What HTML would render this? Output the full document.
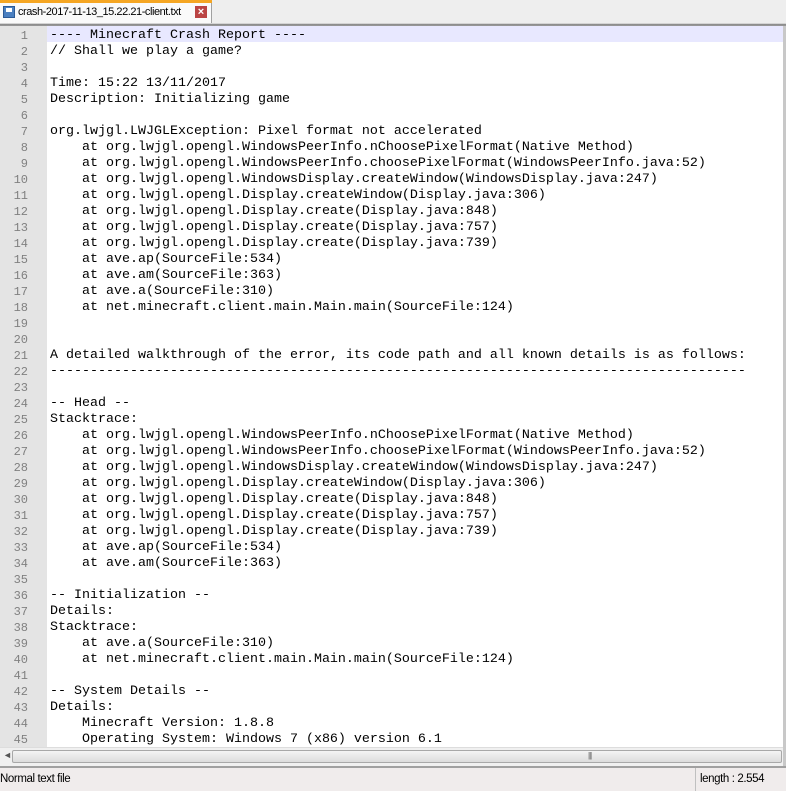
<!DOCTYPE html>
<html><head><meta charset="utf-8"><style>
*{margin:0;padding:0;box-sizing:border-box}
body{width:786px;height:791px;overflow:hidden;background:#f0f0f0;position:relative;font-family:"Liberation Sans",sans-serif}
#tabbar{position:absolute;left:0;top:0;width:786px;height:24px;background:#eeeeee}
#tab{position:absolute;left:0;top:0;width:212px;height:24px;background:#fafafa;border-right:1px solid #a0a0a0}
#tab .or{position:absolute;left:0;top:0;width:212px;height:3px;background:#f5a623}
#tab .lbl{position:absolute;left:18px;top:6px;font-size:11px;color:#000;letter-spacing:-0.45px}
#tab .ic{position:absolute;left:3px;top:6px;width:12px;height:12px;background:#4a7fc0;border:1px solid #2b5a96}
#tab .ic:after{content:"";position:absolute;left:2px;top:1px;width:6px;height:4px;background:#fff}
#tab .x{position:absolute;left:195px;top:6px;width:12px;height:12px;background:#b44;color:#fff;font-size:11px;line-height:12px;text-align:center;font-weight:bold}
#sep{position:absolute;left:0;top:23px;width:786px;height:3px;background:linear-gradient(#fff,#808080 50%,#a0a0a0)}
#ed{position:absolute;left:0;top:26px;width:783px;height:721px;background:#fff;overflow:hidden}
#gut{position:absolute;left:0;top:0;width:47px;height:721px;background:#e4e4e4}
#rb{position:absolute;left:783px;top:26px;width:3px;height:742px;background:#c8c8c8}
.l{position:absolute;left:0;height:16px;width:783px;font-family:"Liberation Mono",monospace;font-size:13.33px;line-height:16px;white-space:pre;color:#000}
.l .n{position:absolute;left:0;top:2px;width:28px;text-align:right;color:#808080;font-size:12px}
.l .t{position:absolute;left:50px;top:2px}
.hl{background:linear-gradient(to right,transparent 47px,#e8e8ff 47px)}
#hs{position:absolute;left:0;top:747px;width:783px;height:17px;background:#f0f0f0;border-top:1px solid #ddd}
#hs .th{position:absolute;left:12px;top:2px;width:770px;height:13px;border:1px solid #a8a8a8;border-radius:2px;background:linear-gradient(#f4f4f4,#dcdcdc)}
#hs .ar{position:absolute;left:3px;top:2px;font-size:9px;color:#555}
#hs .gr{position:absolute;left:588px;top:3px;font-size:8px;color:#666;letter-spacing:-1px}
#sb{position:absolute;left:0;top:766px;width:786px;height:25px;background:#f0ecec;border-top:2px solid #a0a0a0;font-size:11.5px;color:#000}
#sb .a{position:absolute;left:0;top:5px;letter-spacing:-0.4px}
#sb .d{position:absolute;left:695px;top:0;width:1px;height:23px;background:#c0c0c0}
#sb .b{position:absolute;left:700px;top:5px;letter-spacing:-0.4px}
</style></head><body>
<div id="tabbar"><div id="tab"><div class="or"></div><div class="ic"></div><div class="lbl">crash-2017-11-13_15.22.21-client.txt</div><div class="x">×</div></div></div>
<div id="sep"></div>
<div id="ed"><div id="gut"></div>
<div class="l hl" style="top:0"><span class="n">1</span><span class="t">---- Minecraft Crash Report ----</span></div>
<div class="l" style="top:16px"><span class="n">2</span><span class="t">// Shall we play a game?</span></div>
<div class="l" style="top:32px"><span class="n">3</span></div>
<div class="l" style="top:48px"><span class="n">4</span><span class="t">Time: 15:22 13/11/2017</span></div>
<div class="l" style="top:64px"><span class="n">5</span><span class="t">Description: Initializing game</span></div>
<div class="l" style="top:80px"><span class="n">6</span></div>
<div class="l" style="top:96px"><span class="n">7</span><span class="t">org.lwjgl.LWJGLException: Pixel format not accelerated</span></div>
<div class="l" style="top:112px"><span class="n">8</span><span class="t">    at org.lwjgl.opengl.WindowsPeerInfo.nChoosePixelFormat(Native Method)</span></div>
<div class="l" style="top:128px"><span class="n">9</span><span class="t">    at org.lwjgl.opengl.WindowsPeerInfo.choosePixelFormat(WindowsPeerInfo.java:52)</span></div>
<div class="l" style="top:144px"><span class="n">10</span><span class="t">    at org.lwjgl.opengl.WindowsDisplay.createWindow(WindowsDisplay.java:247)</span></div>
<div class="l" style="top:160px"><span class="n">11</span><span class="t">    at org.lwjgl.opengl.Display.createWindow(Display.java:306)</span></div>
<div class="l" style="top:176px"><span class="n">12</span><span class="t">    at org.lwjgl.opengl.Display.create(Display.java:848)</span></div>
<div class="l" style="top:192px"><span class="n">13</span><span class="t">    at org.lwjgl.opengl.Display.create(Display.java:757)</span></div>
<div class="l" style="top:208px"><span class="n">14</span><span class="t">    at org.lwjgl.opengl.Display.create(Display.java:739)</span></div>
<div class="l" style="top:224px"><span class="n">15</span><span class="t">    at ave.ap(SourceFile:534)</span></div>
<div class="l" style="top:240px"><span class="n">16</span><span class="t">    at ave.am(SourceFile:363)</span></div>
<div class="l" style="top:256px"><span class="n">17</span><span class="t">    at ave.a(SourceFile:310)</span></div>
<div class="l" style="top:272px"><span class="n">18</span><span class="t">    at net.minecraft.client.main.Main.main(SourceFile:124)</span></div>
<div class="l" style="top:288px"><span class="n">19</span></div>
<div class="l" style="top:304px"><span class="n">20</span></div>
<div class="l" style="top:320px"><span class="n">21</span><span class="t">A detailed walkthrough of the error, its code path and all known details is as follows:</span></div>
<div class="l" style="top:336px"><span class="n">22</span><span class="t">---------------------------------------------------------------------------------------</span></div>
<div class="l" style="top:352px"><span class="n">23</span></div>
<div class="l" style="top:368px"><span class="n">24</span><span class="t">-- Head --</span></div>
<div class="l" style="top:384px"><span class="n">25</span><span class="t">Stacktrace:</span></div>
<div class="l" style="top:400px"><span class="n">26</span><span class="t">    at org.lwjgl.opengl.WindowsPeerInfo.nChoosePixelFormat(Native Method)</span></div>
<div class="l" style="top:416px"><span class="n">27</span><span class="t">    at org.lwjgl.opengl.WindowsPeerInfo.choosePixelFormat(WindowsPeerInfo.java:52)</span></div>
<div class="l" style="top:432px"><span class="n">28</span><span class="t">    at org.lwjgl.opengl.WindowsDisplay.createWindow(WindowsDisplay.java:247)</span></div>
<div class="l" style="top:448px"><span class="n">29</span><span class="t">    at org.lwjgl.opengl.Display.createWindow(Display.java:306)</span></div>
<div class="l" style="top:464px"><span class="n">30</span><span class="t">    at org.lwjgl.opengl.Display.create(Display.java:848)</span></div>
<div class="l" style="top:480px"><span class="n">31</span><span class="t">    at org.lwjgl.opengl.Display.create(Display.java:757)</span></div>
<div class="l" style="top:496px"><span class="n">32</span><span class="t">    at org.lwjgl.opengl.Display.create(Display.java:739)</span></div>
<div class="l" style="top:512px"><span class="n">33</span><span class="t">    at ave.ap(SourceFile:534)</span></div>
<div class="l" style="top:528px"><span class="n">34</span><span class="t">    at ave.am(SourceFile:363)</span></div>
<div class="l" style="top:544px"><span class="n">35</span></div>
<div class="l" style="top:560px"><span class="n">36</span><span class="t">-- Initialization --</span></div>
<div class="l" style="top:576px"><span class="n">37</span><span class="t">Details:</span></div>
<div class="l" style="top:592px"><span class="n">38</span><span class="t">Stacktrace:</span></div>
<div class="l" style="top:608px"><span class="n">39</span><span class="t">    at ave.a(SourceFile:310)</span></div>
<div class="l" style="top:624px"><span class="n">40</span><span class="t">    at net.minecraft.client.main.Main.main(SourceFile:124)</span></div>
<div class="l" style="top:640px"><span class="n">41</span></div>
<div class="l" style="top:656px"><span class="n">42</span><span class="t">-- System Details --</span></div>
<div class="l" style="top:672px"><span class="n">43</span><span class="t">Details:</span></div>
<div class="l" style="top:688px"><span class="n">44</span><span class="t">    Minecraft Version: 1.8.8</span></div>
<div class="l" style="top:704px"><span class="n">45</span><span class="t">    Operating System: Windows 7 (x86) version 6.1</span></div>
</div>
<div id="rb"></div>
<div id="hs"><span class="ar">◄</span><div class="th"></div><span class="gr">|||</span></div>
<div id="sb"><span class="a">Normal text file</span><div class="d"></div><span class="b">length : 2.554</span></div>
</body></html>
